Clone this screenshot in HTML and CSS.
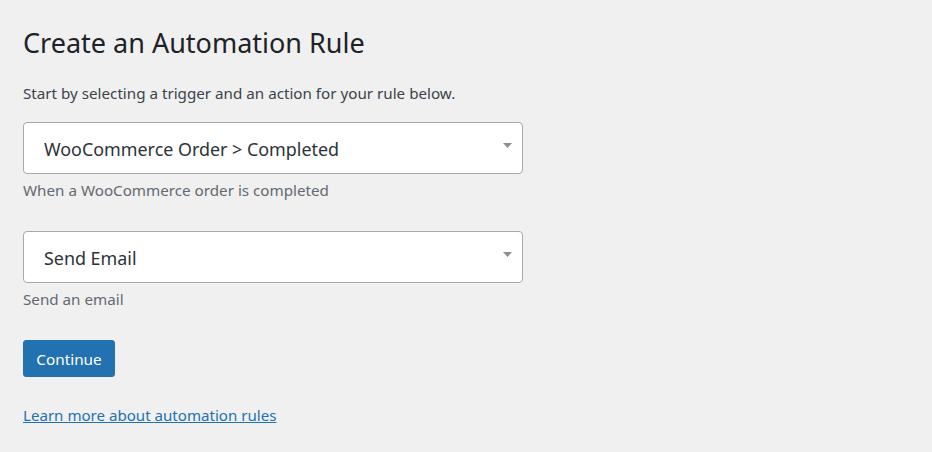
FILE: index.html
```html
<!DOCTYPE html>
<html lang="en">
<head>
<meta charset="utf-8">
<title>Create an Automation Rule</title>
<link rel="stylesheet" href="styles.css">
</head>
<body>
<main class="wrap">
  <h1 class="title">Create an Automation Rule</h1>
  <p class="intro">Start by selecting a trigger and an action for your rule below.</p>
  <div class="field">
    <div class="select">
      <span class="select-value">WooCommerce Order &gt; Completed</span>
      <svg class="arrow" width="9" height="5" viewBox="0 0 9 5"><path d="M0 0H9L4.5 5Z" fill="#8c8f94"/></svg>
    </div>
    <p class="help">When a WooCommerce order is completed</p>
  </div>
  <div class="field">
    <div class="select">
      <span class="select-value">Send Email</span>
      <svg class="arrow" width="9" height="5" viewBox="0 0 9 5"><path d="M0 0H9L4.5 5Z" fill="#8c8f94"/></svg>
    </div>
    <p class="help">Send an email</p>
  </div>
  <div class="actions">
    <button class="btn-primary" type="button">Continue</button>
  </div>
  <a class="learn" href="#">Learn more about automation rules</a>
</main>
</body>
</html>
```

FILE: styles.css
```css
html, body {
  margin: 0;
  padding: 0;
  background: #f0f0f1;
}
body {
  font-family: "Noto Sans", "Open Sans", sans-serif;
  color: #1d2327;
}
.wrap {
  padding: 25px 23px 0 23px;
  display: flex;
  flex-direction: column;
  align-items: flex-start;
}
.title {
  margin: 0;
  font-size: 27px;
  font-weight: 400;
  line-height: 36px;
  color: #1d2327;
}
.intro {
  margin: 22px 0 0 0;
  font-size: 15.2px;
  line-height: 20px;
  color: #3c434a;
}
.field {
  margin-top: 19px;
  display: flex;
  flex-direction: column;
}
.field + .field {
  margin-top: 31px;
}
.select {
  box-sizing: border-box;
  width: 500px;
  height: 52px;
  background: #fff;
  border: 1px solid #a7aaad;
  border-radius: 4px;
  display: flex;
  align-items: center;
  justify-content: space-between;
  padding: 0 10px 0 20px;
}
.select-value {
  font-size: 17.9px;
  color: #2c3338;
  padding-top: 2px;
}
.arrow {
  margin-top: -6px;
}
.help {
  margin: 6px 0 0 0;
  font-size: 15.2px;
  line-height: 20px;
  color: #646970;
}
.actions {
  margin-top: 31px;
}
.btn-primary {
  font-family: inherit;
  font-size: 15.3px;
  height: 37px;
  width: 92px;
  padding: 0;
  background: #2271b1;
  color: #fff;
  border: 1px solid #2271b1;
  border-radius: 3px;
  cursor: pointer;
}
.learn {
  margin-top: 28px;
  font-size: 15.1px;
  line-height: 20px;
  color: #2271b1;
}
```
